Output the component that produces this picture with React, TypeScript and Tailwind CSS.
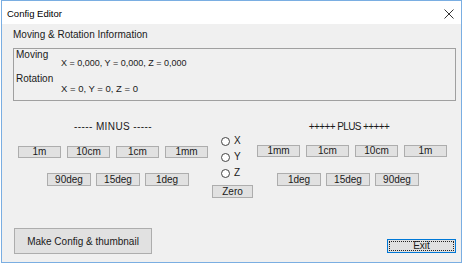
import React from "react";

function Btn({ label, w = "w-[43px]", h = "h-[12px]" }: { label: string; w?: string; h?: string }) {
  return (
    <div
      className={`${w} ${h} flex items-center justify-center border border-[#adadad] bg-[#e1e1e1] text-[10px] leading-none text-[#1a1a1a]`}
    >
      {label}
    </div>
  );
}

function Radio({ label }: { label: string }) {
  return (
    <div className="h-[16px] flex items-center pl-[9px] gap-[4px]">
      <div className="w-[9px] h-[9px] rounded-full border border-[#444] bg-white" />
      <span className="text-[10px] leading-none text-[#1a1a1a]">{label}</span>
    </div>
  );
}

export default function App() {
  return (
    <div className="w-[463px] h-[266px] bg-white font-['Liberation_Sans',Arial,sans-serif]">
      <div className="ml-[1px] w-[461px] h-[263px] border border-[#7aaee2] flex flex-col">
        {/* Title bar */}
        <div className="h-[23px] bg-white flex items-center justify-between pl-[5px] pr-[7px]">
          <span className="text-[9.5px] text-[#000] leading-none mt-[2px]">Config Editor</span>
          <svg width="10" height="10" viewBox="0 0 10 10" className="mt-[2px]">
            <path d="M0.5 0.5 L9.5 9.5 M9.5 0.5 L0.5 9.5" stroke="#333" strokeWidth="1" fill="none" />
          </svg>
        </div>
        {/* Content */}
        <div className="flex-1 bg-[#f0f0f0] flex flex-col">
          <div className="mt-[5px] ml-[11px] h-[12px] leading-[12px] text-[10px] text-[#1a1a1a]">
            Moving &amp; Rotation Information
          </div>
          <div className="mt-[7px] ml-[11px] mr-[5px] h-[53px] border border-[#a0a0a0] flex flex-col text-[#1a1a1a]">
            <div className="pl-[2px] h-[12px] leading-[12px] text-[10px]">Moving</div>
            <div className="-mt-[4px] pl-[47px] h-[12px] leading-[12px] text-[9px]">X = 0,000, Y = 0,000, Z = 0,000</div>
            <div className="mt-[4px] pl-[2px] h-[12px] leading-[12px] text-[10px]">Rotation</div>
            <div className="-mt-[2px] pl-[47px] h-[12px] leading-[12px] text-[9.5px]">X = 0, Y = 0, Z = 0</div>
          </div>
          {/* Middle */}
          <div className="mt-[20px] ml-[16px] flex items-start gap-[4px]">
            <div className="w-[190px] flex flex-col">
              <div className="h-[12px] leading-[12px] text-[10px] text-center text-[#1a1a1a] tracking-[0.4px]">----- MINUS -----</div>
              <div className="mt-[13px] flex gap-[6px]">
                <Btn label="1m" />
                <Btn label="10cm" />
                <Btn label="1cm" />
                <Btn label="1mm" />
              </div>
              <div className="mt-[15px] pl-[29px] flex gap-[5px]">
                <Btn label="90deg" w="w-[44px]" h="h-[13px]" />
                <Btn label="15deg" w="w-[44px]" h="h-[13px]" />
                <Btn label="1deg" w="w-[44px]" h="h-[13px]" />
              </div>
            </div>
            <div className="w-[41px] mt-[12px] flex flex-col">
              <Radio label="X" />
              <Radio label="Y" />
              <Radio label="Z" />
              <div className="mt-[4px]">
                <Btn label="Zero" w="w-[41px]" h="h-[13px]" />
              </div>
            </div>
            <div className="w-[190px] flex flex-col">
              <div className="h-[12px] leading-[12px] text-[10px] text-center text-[#1a1a1a] pr-[6px] tracking-[-0.6px]">+++++ PLUS +++++</div>
              <div className="mt-[12px] flex gap-[6px]">
                <Btn label="1mm" />
                <Btn label="1cm" />
                <Btn label="10cm" />
                <Btn label="1m" />
              </div>
              <div className="mt-[16px] pl-[20px] flex gap-[5px]">
                <Btn label="1deg" w="w-[44px]" h="h-[13px]" />
                <Btn label="15deg" w="w-[44px]" h="h-[13px]" />
                <Btn label="90deg" w="w-[44px]" h="h-[13px]" />
              </div>
            </div>
          </div>
          {/* Bottom */}
          <div className="mt-auto mb-[8px] ml-[12px] mr-[5px] flex items-end justify-between">
            <div className="w-[138px] h-[26px] flex items-center justify-center border border-[#adadad] bg-[#e1e1e1] text-[10px] text-[#1a1a1a]">
              Make Config &amp; thumbnail
            </div>
            <div className="mb-[1px] w-[69px] h-[14px] border border-[#0078d7] bg-[#e1e1e1] p-[1px]">
              <div className="w-full h-full border border-dotted border-[#222] flex items-center justify-center text-[10px] leading-none text-[#1a1a1a]">
                Exit
              </div>
            </div>
          </div>
        </div>
      </div>
    </div>
  );
}
